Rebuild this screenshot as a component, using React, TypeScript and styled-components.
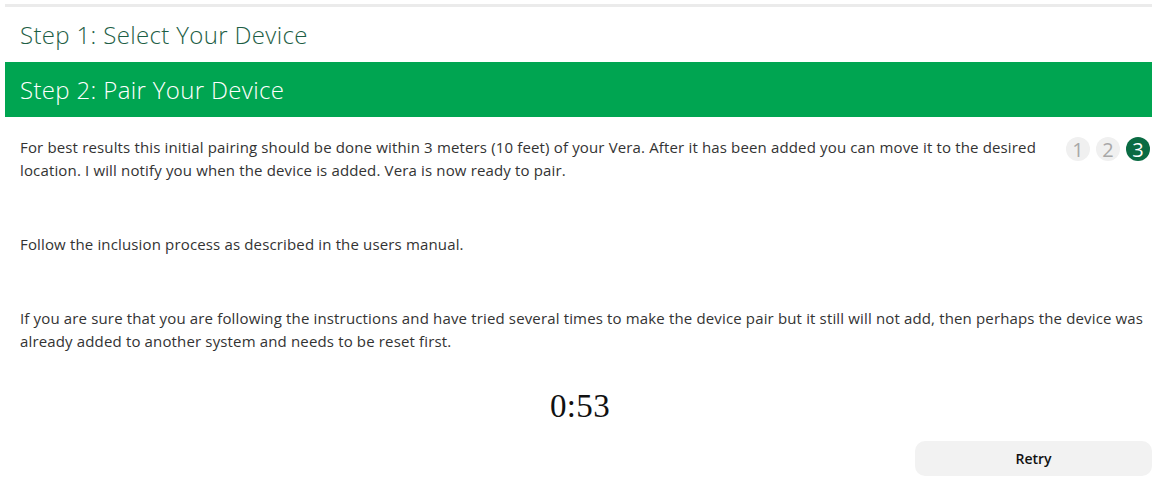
import React from 'react';
import styled, { createGlobalStyle } from 'styled-components';

const GlobalStyle = createGlobalStyle`
  body {
    margin: 0;
    background: #ffffff;
    font-family: "Open Sans", "Liberation Sans", sans-serif;
  }
`;

const Page = styled.div`
  padding: 4px 8px 0 5px;
`;

const Wizard = styled.div`
  width: 1147px;
  border-top: 3px solid #ebebeb;
`;

const StepHeader = styled.div<{ active?: boolean }>`
  height: 55px;
  line-height: 55px;
  padding: 0 15px;
  font-size: 24px;
  font-weight: 300;
  letter-spacing: 0.35px;
  color: ${(p) => (p.active ? '#ffffff' : '#1d5e45')};
  background: ${(p) => (p.active ? '#00a551' : 'transparent')};
`;

const Body = styled.div`
  padding: 19px 0 0 15px;
  color: #333333;
  font-size: 15px;
  letter-spacing: 0.15px;
  line-height: 23px;
`;

const IntroRow = styled.div`
  display: flex;
  justify-content: space-between;
  align-items: flex-start;
  gap: 20px;
`;

const Paragraph = styled.p`
  margin: 0 0 51px;
`;

const Pager = styled.div`
  display: flex;
  gap: 6px;
  padding-top: 1px;
  margin-right: 2px;
  letter-spacing: 0;
`;

const PageDot = styled.span<{ current?: boolean }>`
  width: 24px;
  height: 24px;
  border-radius: 50%;
  display: flex;
  align-items: center;
  justify-content: center;
  font-size: 20px;
  color: ${(p) => (p.current ? '#ffffff' : '#a8a8a8')};
  background: ${(p) => (p.current ? '#0a6b43' : '#f0f0f0')};
`;

const Timer = styled.div`
  text-align: center;
  font-family: "Liberation Serif", "Times New Roman", serif;
  font-size: 33px;
  letter-spacing: 0.3px;
  line-height: 40px;
  color: #111111;
  margin-top: -18px;
  padding-right: 12px;
`;

const Footer = styled.div`
  display: flex;
  justify-content: flex-end;
  margin-top: 15px;
`;

const RetryButton = styled.button`
  width: 237px;
  height: 35px;
  border: none;
  border-radius: 10px;
  background: #f2f2f2;
  font-family: "Open Sans", "Liberation Sans", sans-serif;
  font-size: 14px;
  font-weight: 600;
  color: #111111;
  cursor: pointer;
`;

export default function App() {
  return (
    <Page>
      <GlobalStyle />
      <Wizard>
        <StepHeader>Step 1: Select Your Device</StepHeader>
        <StepHeader active>Step 2: Pair Your Device</StepHeader>
        <Body>
          <IntroRow>
            <Paragraph>
              For best results this initial pairing should be done within 3 meters (10 feet) of your Vera. After it has been added you can move it to the desired location. I will notify you when the device is added. Vera is now ready to pair.
            </Paragraph>
            <Pager>
              <PageDot>1</PageDot>
              <PageDot>2</PageDot>
              <PageDot current>3</PageDot>
            </Pager>
          </IntroRow>
          <Paragraph>Follow the inclusion process as described in the users manual.</Paragraph>
          <Paragraph>
            If you are sure that you are following the instructions and have tried several times to make the device pair but it still will not add, then perhaps the device was already added to another system and needs to be reset first.
          </Paragraph>
          <Timer>0:53</Timer>
          <Footer>
            <RetryButton>Retry</RetryButton>
          </Footer>
        </Body>
      </Wizard>
    </Page>
  );
}
